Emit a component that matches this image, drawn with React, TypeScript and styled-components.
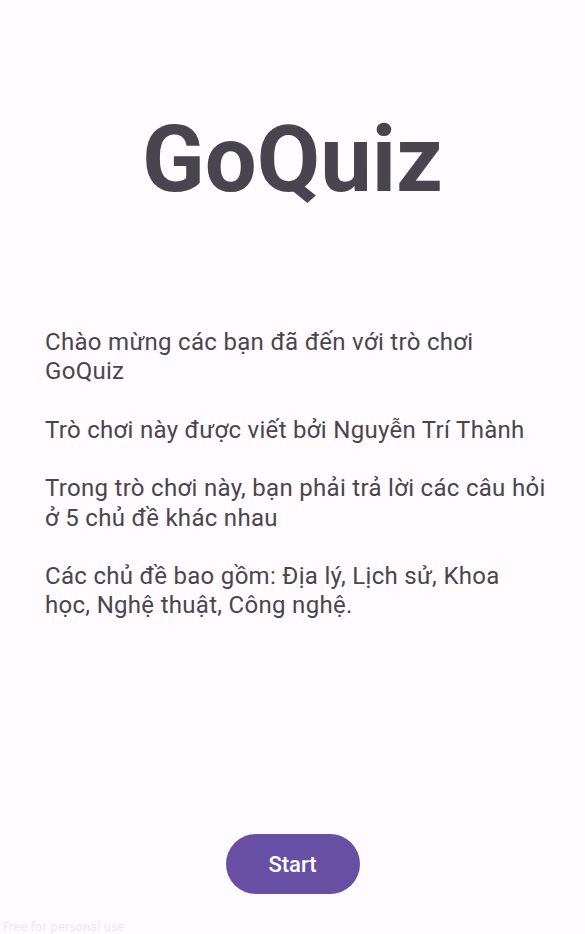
import React from "react";
import styled, { createGlobalStyle } from "styled-components";

const Global = createGlobalStyle`
  html, body { margin: 0; padding: 0; background: #fffbfe; }
  body { font-family: Roboto, "Noto Sans", sans-serif; }
`;

const Screen = styled.div`
  position: relative;
  height: 934px;
  display: flex;
  flex-direction: column;
  background: #fffbfe;
  overflow: hidden;
`;

const Title = styled.h1`
  margin: 0;
  padding-top: 106px;
  text-align: center;
  font-family: Roboto, sans-serif;
  font-weight: 700;
  font-size: 92px;
  line-height: 108px;
  color: #49454f;
  letter-spacing: 0;
`;

const Body = styled.div`
  margin-top: 114px;
  padding: 0 38px 0 45px;
  display: flex;
  flex-direction: column;
  gap: 29px;
`;

const Para = styled.p`
  margin: 0;
  font-family: Roboto, sans-serif;
  font-size: 24px;
  line-height: 29.4px;
  letter-spacing: 0.3px;
  color: #49454f;
`;

const Footer = styled.div`
  margin-top: auto;
  padding-bottom: 40px;
  display: flex;
  justify-content: center;
`;

const StartButton = styled.button`
  width: 134px;
  height: 60px;
  border: none;
  border-radius: 30px;
  background: #6750a4;
  color: #ffffff;
  font-family: Roboto, sans-serif;
  font-weight: 500;
  font-size: 22px;
  cursor: pointer;
`;

const Watermark = styled.div`
  position: absolute;
  left: 3px;
  bottom: 0;
  font-family: "DejaVu Sans", sans-serif;
  font-size: 11.5px;
  line-height: 13px;
  color: #ece6ee;
  text-shadow: 0 0 1px #ffffff;
`;

export default function App() {
  return (
    <>
      <Global />
      <Screen>
        <Title>GoQuiz</Title>
        <Body>
          <Para>Chào mừng các bạn đã đến với trò chơi GoQuiz</Para>
          <Para>Trò chơi này được viết bởi Nguyễn Trí Thành</Para>
          <Para>Trong trò chơi này, bạn phải trả lời các câu hỏi ở 5 chủ đề khác nhau</Para>
          <Para>Các chủ đề bao gồm: Địa lý, Lịch sử, Khoa học, Nghệ thuật, Công nghệ.</Para>
        </Body>
        <Footer>
          <StartButton>Start</StartButton>
        </Footer>
        <Watermark>Free for personal use</Watermark>
      </Screen>
    </>
  );
}
